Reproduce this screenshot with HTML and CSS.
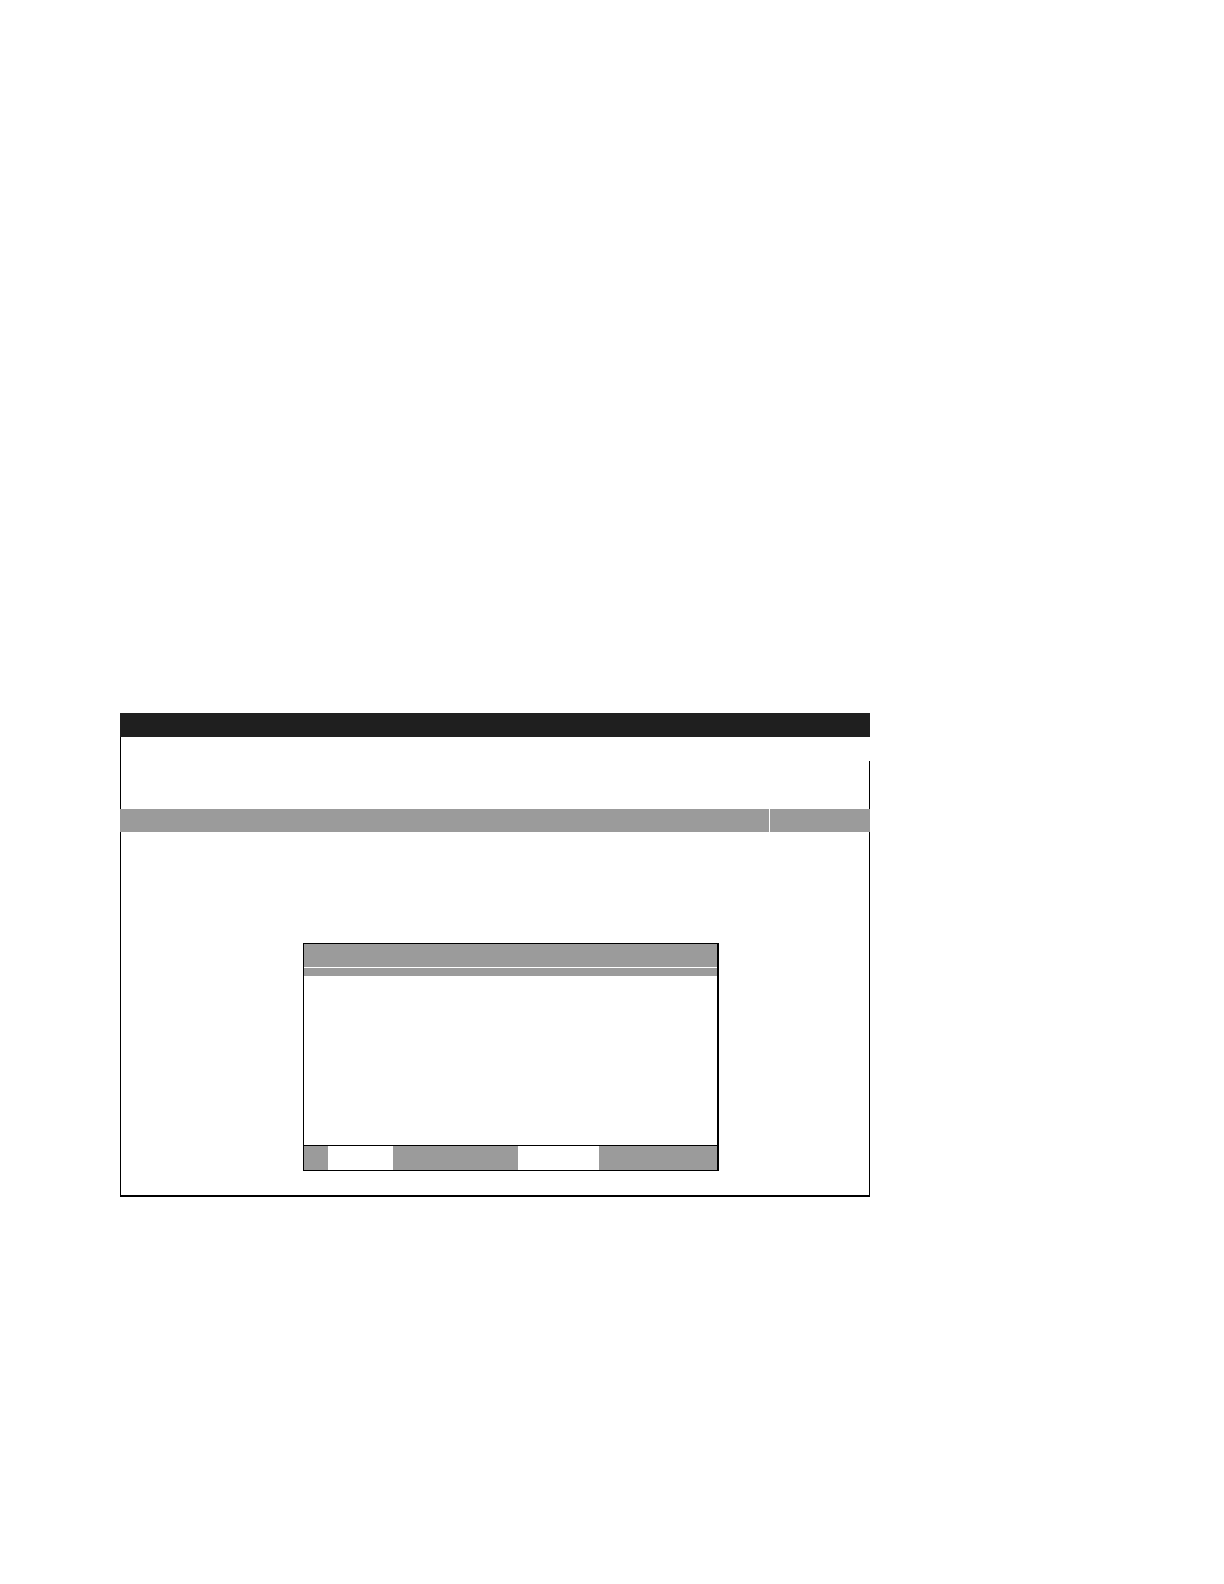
FILE: index.html
```html
<!DOCTYPE html>
<html lang="en">
<head>
<meta charset="utf-8">
<title>Form</title>
<link rel="stylesheet" href="styles.css">
</head>
<body>
<div class="sheet">
  <div class="bar-dark"></div>
  <div class="row row-a"></div>
  <div class="row row-b"></div>
  <div class="row-gray">
    <div class="gcell gcell-main"></div>
    <div class="gcell gcell-side"></div>
  </div>
  <div class="row row-body">
    <div class="inner">
      <div class="inner-head"></div>
      <div class="inner-strip"></div>
      <div class="inner-body"></div>
      <div class="inner-foot">
        <div class="fcell gray w24"></div>
        <div class="fcell white w65"></div>
        <div class="fcell gray w125"></div>
        <div class="fcell white w81"></div>
        <div class="fcell gray grow"></div>
      </div>
    </div>
  </div>
  <div class="row row-last"></div>
</div>
</body>
</html>
```
FILE: styles.css
```css
html, body {
  margin: 0;
  padding: 0;
  background: #ffffff;
  font-family: "Liberation Sans", Arial, sans-serif;
}

.sheet {
  margin: 713px 0 0 120px;
  width: 750px;
  padding-bottom: 387px;
}

.bar-dark {
  height: 24px;
  background: #1f1f1f;
}

.row {
  box-sizing: border-box;
  border-left: 1px solid #000;
  border-right: 1px solid #000;
}

.row-a {
  height: 24px;
  border-right-color: transparent;
}

.row-b {
  height: 48px;
}

.row-gray {
  display: flex;
  gap: 1px;
  height: 23px;
}

.gcell {
  background: #9b9b9b;
}

.gcell-main {
  width: 649px;
}

.gcell-side {
  flex: 1;
}

.row-body {
  padding: 111px 0 0 182px;
  height: 337px;
}

.row-last {
  height: 28px;
  border-bottom: 2px solid #000;
}

.inner {
  width: 416px;
  box-sizing: border-box;
  border: 1px solid #000;
  border-right-width: 2px;
  display: flex;
  flex-direction: column;
}

.inner-head {
  height: 23px;
  background: #9b9b9b;
  border-bottom: 1px solid #fff;
}

.inner-strip {
  height: 8px;
  background: #9b9b9b;
}

.inner-body {
  height: 169px;
  border-bottom: 1px solid #000;
}

.inner-foot {
  display: flex;
  height: 24px;
}

.fcell {
  height: 100%;
}

.gray {
  background: #9b9b9b;
}

.white {
  background: #ffffff;
}

.w24 { width: 24px; }
.w65 { width: 65px; }
.w125 { width: 125px; }
.w81 { width: 81px; }
.grow { flex: 1; }
```
